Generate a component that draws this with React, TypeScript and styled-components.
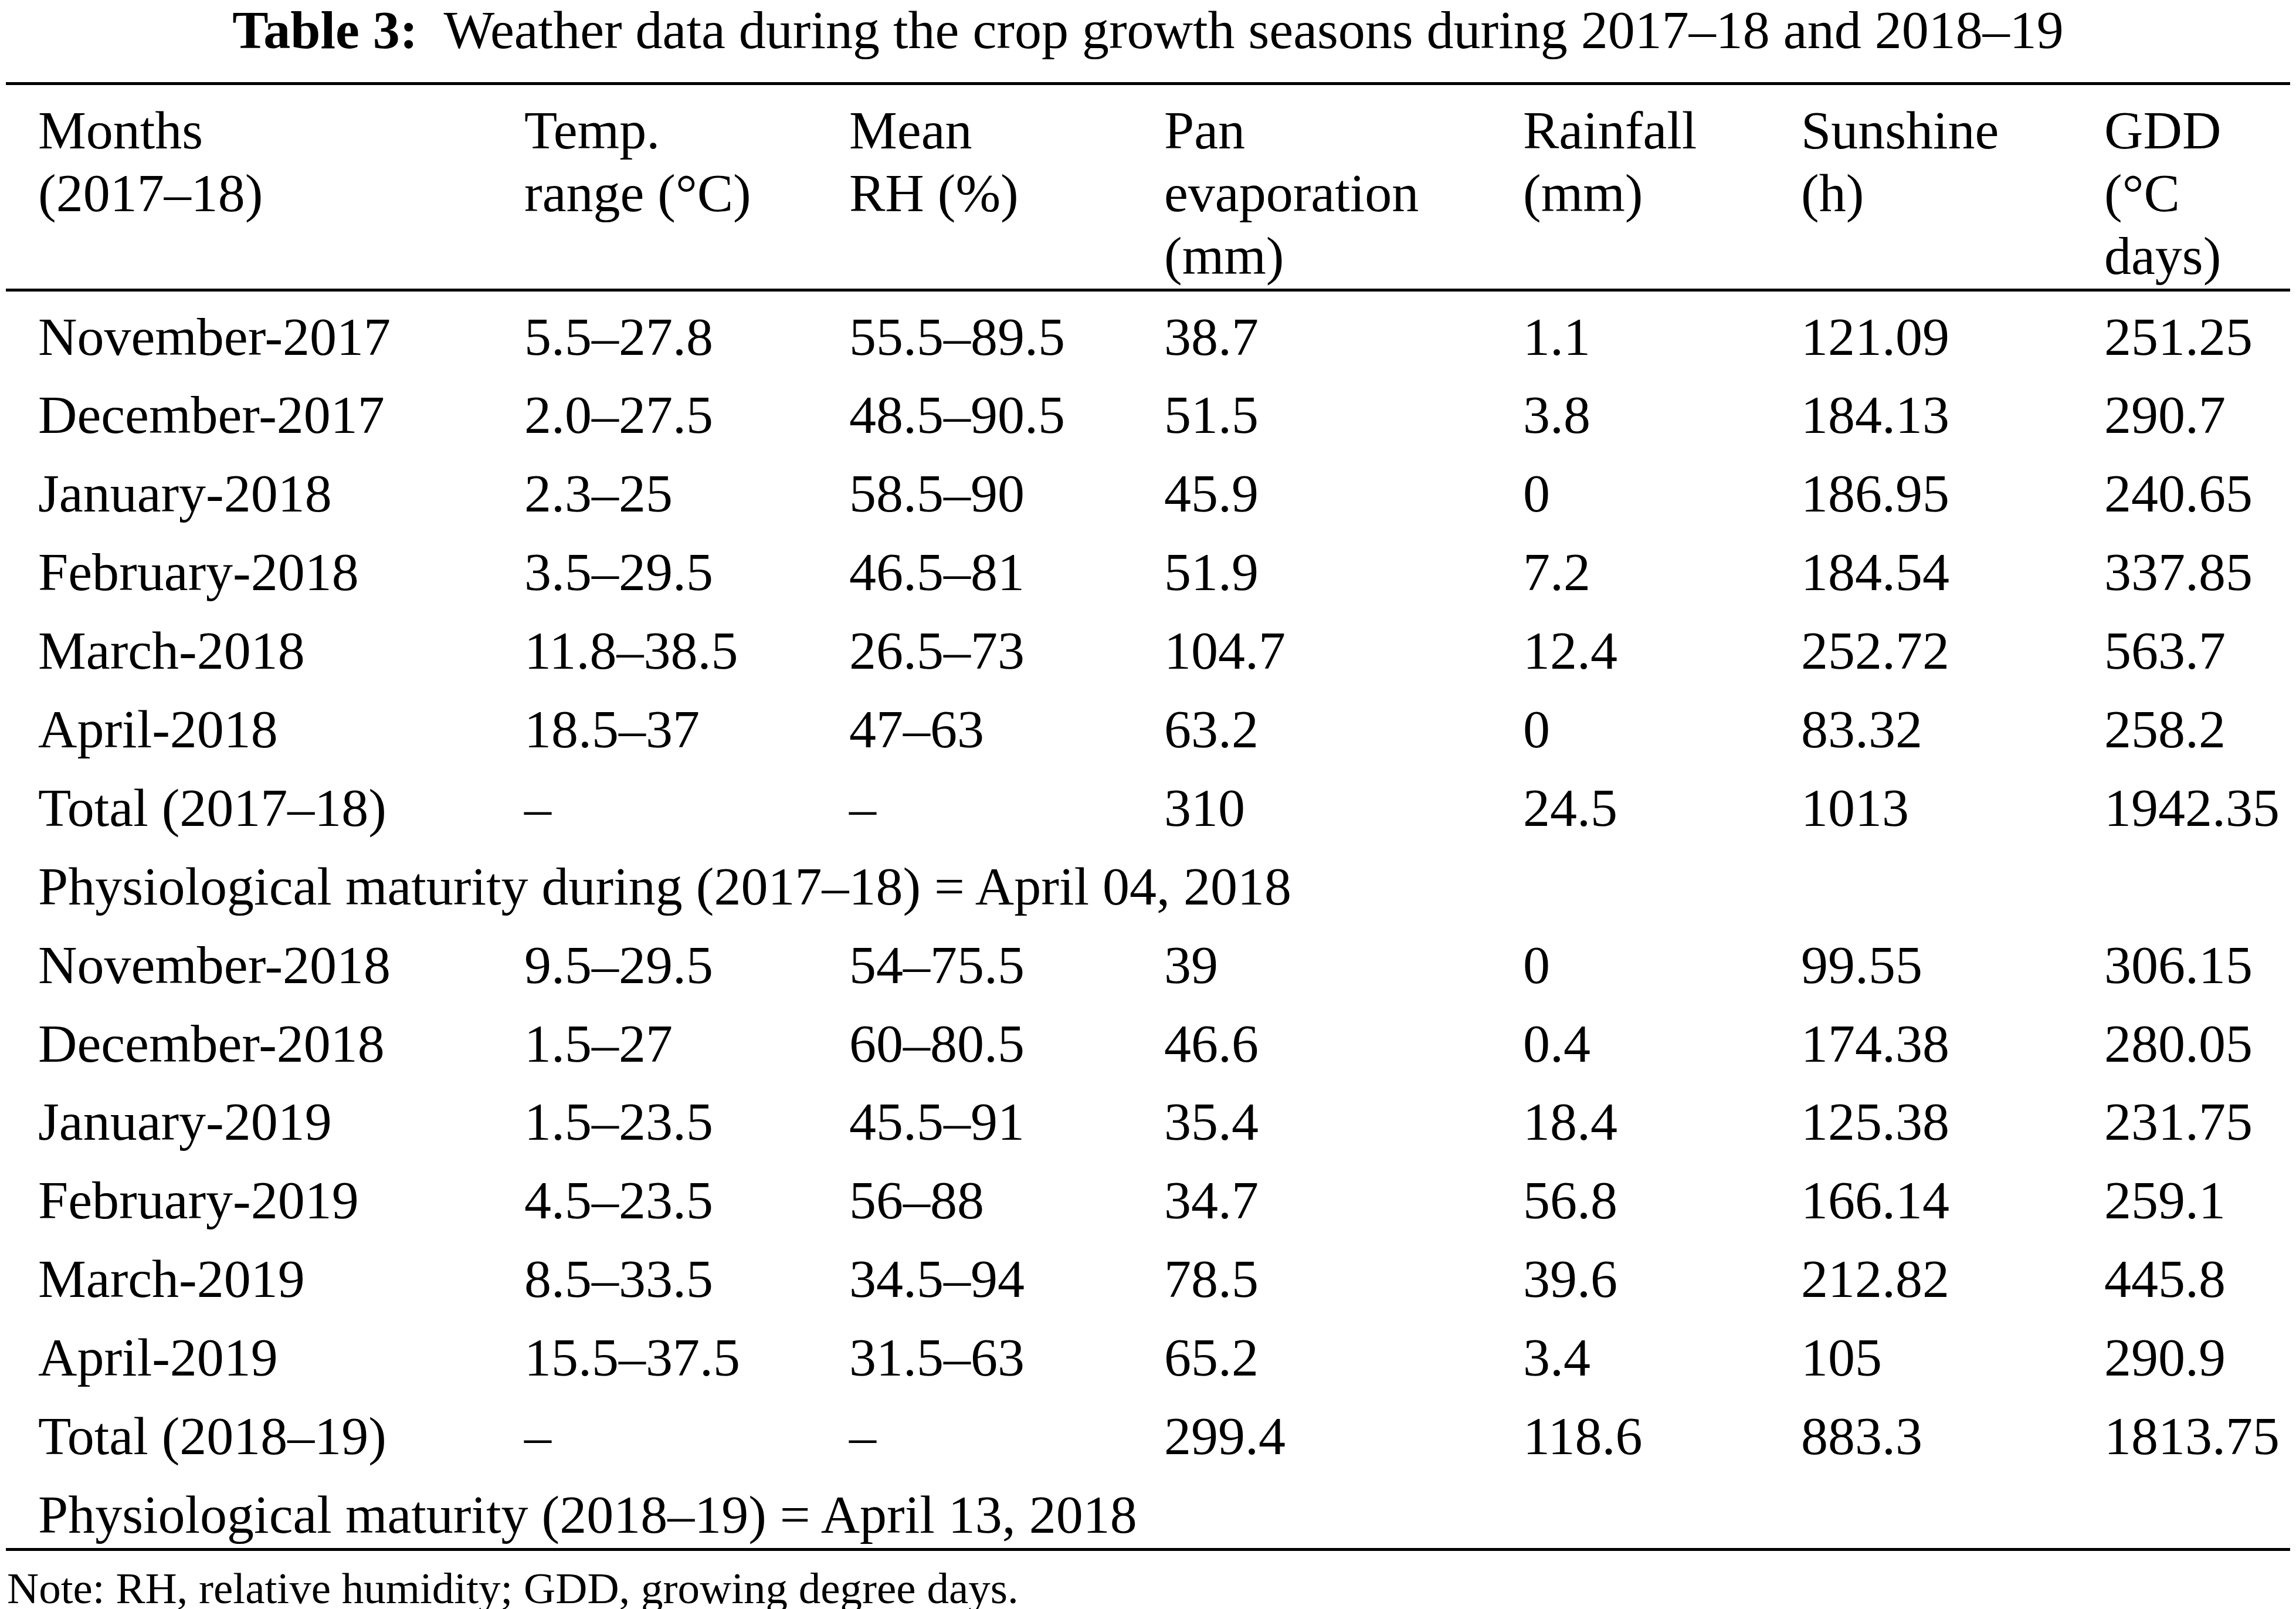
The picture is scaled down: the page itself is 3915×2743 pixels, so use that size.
import React from "react"
import styled, { createGlobalStyle } from "styled-components"

const GlobalStyle = createGlobalStyle`
  html, body {
    margin: 0;
    padding: 0;
    background: #ffffff;
  }
  body {
    font-family: "Liberation Serif", "Times New Roman", serif;
    color: #000000;
  }
`

type Row = {
  month: string
  temp: string
  rh: string
  pan: string
  rain: string
  sun: string
  gdd: string
}

type Entry = { kind: "data"; row: Row } | { kind: "note"; text: string }

const header: string[][] = [
  ["Months", "(2017–18)"],
  ["Temp.", "range (°C)"],
  ["Mean", "RH (%)"],
  ["Pan", "evaporation", "(mm)"],
  ["Rainfall", "(mm)"],
  ["Sunshine", "(h)"],
  ["GDD", "(°C", "days)"],
]

const r = (month: string, temp: string, rh: string, pan: string, rain: string, sun: string, gdd: string): Entry => ({
  kind: "data",
  row: { month, temp, rh, pan, rain, sun, gdd },
})

const entries: Entry[] = [
  r("November-2017", "5.5–27.8", "55.5–89.5", "38.7", "1.1", "121.09", "251.25"),
  r("December-2017", "2.0–27.5", "48.5–90.5", "51.5", "3.8", "184.13", "290.7"),
  r("January-2018", "2.3–25", "58.5–90", "45.9", "0", "186.95", "240.65"),
  r("February-2018", "3.5–29.5", "46.5–81", "51.9", "7.2", "184.54", "337.85"),
  r("March-2018", "11.8–38.5", "26.5–73", "104.7", "12.4", "252.72", "563.7"),
  r("April-2018", "18.5–37", "47–63", "63.2", "0", "83.32", "258.2"),
  r("Total (2017–18)", "–", "–", "310", "24.5", "1013", "1942.35"),
  { kind: "note", text: "Physiological maturity during (2017–18) = April 04, 2018" },
  r("November-2018", "9.5–29.5", "54–75.5", "39", "0", "99.55", "306.15"),
  r("December-2018", "1.5–27", "60–80.5", "46.6", "0.4", "174.38", "280.05"),
  r("January-2019", "1.5–23.5", "45.5–91", "35.4", "18.4", "125.38", "231.75"),
  r("February-2019", "4.5–23.5", "56–88", "34.7", "56.8", "166.14", "259.1"),
  r("March-2019", "8.5–33.5", "34.5–94", "78.5", "39.6", "212.82", "445.8"),
  r("April-2019", "15.5–37.5", "31.5–63", "65.2", "3.4", "105", "290.9"),
  r("Total (2018–19)", "–", "–", "299.4", "118.6", "883.3", "1813.75"),
  { kind: "note", text: "Physiological maturity (2018–19) = April 13, 2018" },
]

export default function App() {
  return (
    <>
      <GlobalStyle />
      <Page>
        <Caption>
          <CaptionLabel>Table 3:</CaptionLabel>
          Weather data during the crop growth seasons during 2017–18 and 2018–19
        </Caption>
        <Frame>
          <HeadRow>
            {header.map((lines, i) => (
              <HeadCell key={i}>
                {lines.map((l, j) => (
                  <HeadLine key={j}>{l}</HeadLine>
                ))}
              </HeadCell>
            ))}
          </HeadRow>
          {entries.map((e, i) =>
            e.kind === "data" ? (
              <BodyRow key={i}>
                <Cell>{e.row.month}</Cell>
                <Cell>{e.row.temp}</Cell>
                <Cell>{e.row.rh}</Cell>
                <Cell>{e.row.pan}</Cell>
                <Cell>{e.row.rain}</Cell>
                <Cell>{e.row.sun}</Cell>
                <Cell>{e.row.gdd}</Cell>
              </BodyRow>
            ) : (
              <BodyRow key={i}>
                <SpanCell>{e.text}</SpanCell>
              </BodyRow>
            )
          )}
        </Frame>
        <Footnote>Note: RH, relative humidity; GDD, growing degree days.</Footnote>
      </Page>
    </>
  )
}

const Page = styled.div`
width:3895px;
padding:0 10px;
`

const Caption = styled.div`
font-size:92px;
line-height:102px;
text-align:center;
margin-bottom:38px;
white-space:nowrap;
`

const CaptionLabel = styled.span`
font-weight:bold;
margin-right:44px;
`

const Frame = styled.div`
border-top:5px solid #000;
border-bottom:5px solid #000;
font-size:92px;
`

const columns = `
display:grid;
grid-template-columns:829px 554px 537px 612px 474px 517px 1fr;
padding-left:55px;
padding-right:25px;
`

const HeadRow = styled.div`
${columns}
border-bottom:5px solid #000;
padding-top:23.5px;
padding-bottom:2.5px;
line-height:107px;
`

const HeadCell = styled.div`
display:flex;
flex-direction:column;
`

const HeadLine = styled.span`
white-space:nowrap;
`

const BodyRow = styled.div`
${columns}
line-height:100px;
padding-top:26.5px;
padding-bottom:7.4px;
`

const Cell = styled.div`
white-space:nowrap;
`

const SpanCell = styled.div`
grid-column:1 / -1;
white-space:nowrap;
`

const Footnote = styled.div`
font-size:75px;
line-height:86px;
margin-top:21px;
padding-left:2px;
white-space:nowrap;
`
